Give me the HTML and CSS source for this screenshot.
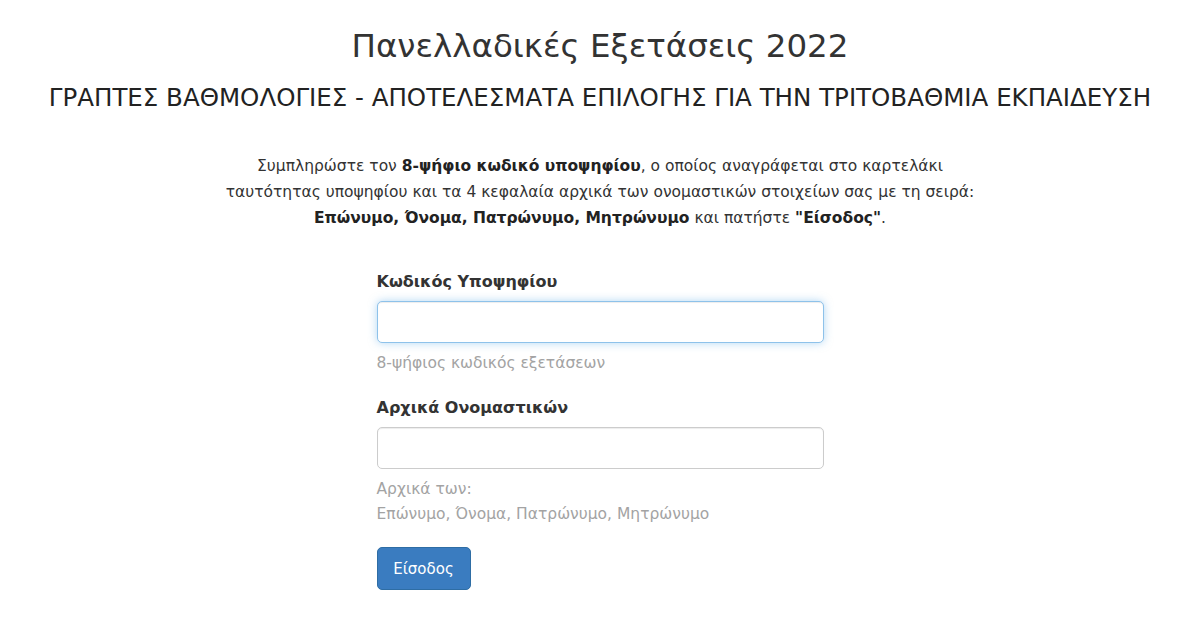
FILE: index.html
```html
<!DOCTYPE html>
<html lang="el">
<head>
<meta charset="utf-8">
<title>Πανελλαδικές Εξετάσεις 2022</title>
<link rel="stylesheet" href="styles.css">
</head>
<body>
<div class="page">
  <header class="head">
    <h1 class="title">Πανελλαδικές Εξετάσεις 2022</h1>
    <h2 class="subtitle">ΓΡΑΠΤΕΣ ΒΑΘΜΟΛΟΓΙΕΣ - ΑΠΟΤΕΛΕΣΜΑΤΑ ΕΠΙΛΟΓΗΣ ΓΙΑ ΤΗΝ ΤΡΙΤΟΒΑΘΜΙΑ ΕΚΠΑΙΔΕΥΣΗ</h2>
  </header>
  <p class="intro">Συμπληρώστε τον <b>8-ψήφιο κωδικό υποψηφίου</b>, ο οποίος αναγράφεται στο καρτελάκι<br>ταυτότητας υποψηφίου και τα 4 κεφαλαία αρχικά των ονομαστικών στοιχείων σας με τη σειρά:<br><b>Επώνυμο, Όνομα, Πατρώνυμο, Μητρώνυμο</b> και πατήστε <b>"Είσοδος"</b>.</p>
  <form class="form">
    <div class="group">
      <label class="label">Κωδικός Υποψηφίου</label>
      <input class="input focused" type="text">
      <span class="help">8-ψήφιος κωδικός εξετάσεων</span>
    </div>
    <div class="group group-last">
      <label class="label">Αρχικά Ονομαστικών</label>
      <input class="input" type="text">
      <span class="help">Αρχικά των:<br>Επώνυμο, Όνομα, Πατρώνυμο, Μητρώνυμο</span>
    </div>
    <button class="btn" type="button">Είσοδος</button>
  </form>
</div>
</body>
</html>
```
FILE: styles.css
```css
html, body {
  margin: 0;
  padding: 0;
  background: #ffffff;
}
body {
  font-family: "DejaVu Sans", "Liberation Sans", sans-serif;
  color: #333333;
}
.page {
  width: 1200px;
  height: 630px;
  display: flex;
  flex-direction: column;
  align-items: center;
  overflow: hidden;
}
.head {
  display: flex;
  flex-direction: column;
  align-items: center;
  padding-top: 24px;
}
.title {
  margin: 0;
  font-weight: normal;
  font-size: 32.5px;
  line-height: 44px;
  color: #333;
  white-space: nowrap;
}
.subtitle {
  margin: 15px 0 0;
  font-weight: normal;
  font-size: 24.5px;
  line-height: 30px;
  color: #222;
  white-space: nowrap;
}
.intro {
  margin: 40px 0 0;
  text-align: center;
  font-size: 15.5px;
  line-height: 26px;
  color: #333;
  white-space: nowrap;
}
.intro b { color: #222; }
.form {
  width: 447px;
  margin-top: 41px;
  display: flex;
  flex-direction: column;
  align-items: flex-start;
}
.group {
  display: flex;
  flex-direction: column;
  align-self: stretch;
  margin-bottom: 22px;
}
.group-last {
  margin-bottom: 20px;
}
.label {
  font-weight: bold;
  font-size: 16px;
  line-height: 20px;
  color: #333;
  margin-bottom: 9px;
}
.input {
  box-sizing: border-box;
  width: 100%;
  height: 42px;
  border: 1px solid #cccccc;
  border-radius: 5px;
  background: #fff;
  box-shadow: inset 0 1px 1px rgba(0,0,0,0.075);
  margin: 0;
}
.input.focused {
  border-color: #8ec2ea;
  box-shadow: inset 0 1px 1px rgba(0,0,0,0.075), 0 0 8px rgba(102,175,233,0.5);
}
.help {
  margin-top: 8px;
  font-size: 15.5px;
  line-height: 25px;
  color: #a3a3a3;
  white-space: nowrap;
}
.btn {
  width: 94px;
  height: 43px;
  border: 1px solid #2e6da4;
  border-radius: 5px;
  background: #3a7cc0;
  color: #fff;
  font-family: "DejaVu Sans", sans-serif;
  font-size: 15px;
}
```
